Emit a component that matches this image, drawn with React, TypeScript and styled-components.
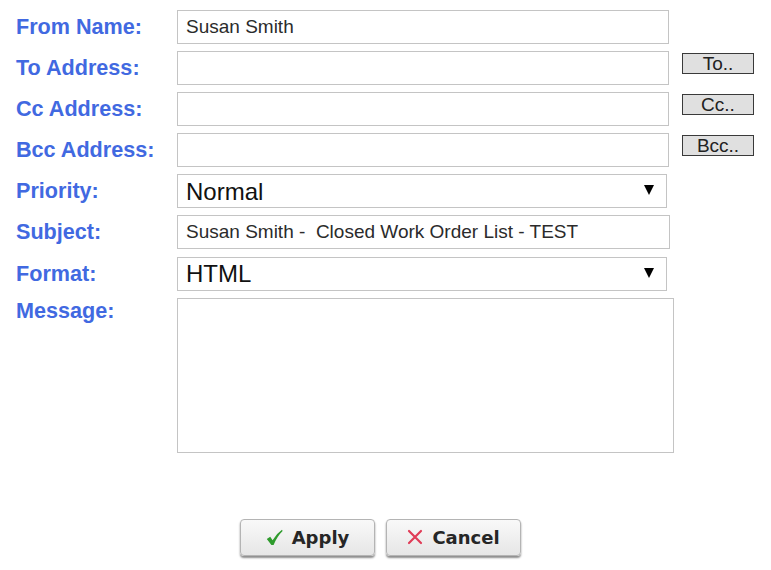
import React from 'react';
import styled, { createGlobalStyle } from 'styled-components';

const GlobalStyle = createGlobalStyle`
  html, body {
    margin: 0;
    padding: 0;
    background: #fff;
  }
  body {
    font-family: "Liberation Sans", Arial, sans-serif;
  }
`;

const Page = styled.div`
  width: 771px;
  min-height: 570px;
  padding: 10px 0 0 16px;
  box-sizing: border-box;
`;

const Form = styled.div`
  display: grid;
  grid-template-columns: 161px 505px 86px;
  grid-template-rows: repeat(7, 34px) auto;
  row-gap: 7.1px;
`;

const Label = styled.div<{ $top?: boolean }>`
  grid-column: 1;
  align-self: ${(p) => (p.$top ? 'start' : 'center')};
  color: #4169e1;
  font-weight: bold;
  font-size: 21.6px;
  line-height: 26px;
  white-space: nowrap;
`;

const Field = styled.div<{ $span?: boolean }>`
  grid-column: ${(p) => (p.$span ? '2 / 4' : '2')};
  display: flex;
`;

const SelectWrap = styled.div`
  grid-column: 2 / 4;
  position: relative;
  display: flex;
`;

const TextInput = styled.input<{ $width: number }>`
  width: ${(p) => p.$width}px;
  height: 34px;
  box-sizing: border-box;
  border: 1px solid #c4c4c4;
  padding: 0 8px;
  font-family: "Liberation Sans", Arial, sans-serif;
  font-size: 19px;
  color: #2b2b2b;
  outline: none;
`;

const Select = styled.select`
  appearance: none;
  -webkit-appearance: none;
  width: 490px;
  height: 34px;
  box-sizing: border-box;
  border: 1px solid #c4c4c4;
  border-radius: 0;
  background: #fff;
  padding: 0 8px;
  font-family: "Liberation Sans", Arial, sans-serif;
  font-size: 24px;
  color: #111;
  outline: none;
`;

const Arrow = styled.span`
  position: absolute;
  left: 467px;
  top: 11px;
  width: 0;
  height: 0;
  border-left: 5px solid transparent;
  border-right: 5px solid transparent;
  border-top: 10px solid #000;
  pointer-events: none;
`;

const TextArea = styled.textarea`
  width: 497px;
  height: 155px;
  box-sizing: border-box;
  border: 1px solid #c4c4c4;
  resize: none;
  outline: none;
  font-family: "Liberation Sans", Arial, sans-serif;
  font-size: 16px;
`;

const PickButton = styled.button`
  grid-column: 3;
  align-self: start;
  margin: 2px 0 0 0;
  width: 72px;
  height: 21px;
  padding: 0;
  background: #e0e0e0;
  border: 1px solid #3a3a3a;
  border-radius: 0;
  font-family: "Liberation Sans", Arial, sans-serif;
  font-size: 19px;
  line-height: 19px;
  color: #222;
`;

const Footer = styled.div`
  display: flex;
  gap: 11px;
  padding: 66px 0 0 224px;
`;

const ActionButton = styled.button`
  display: flex;
  align-items: center;
  justify-content: center;
  gap: 9px;
  width: 135px;
  height: 37px;
  padding: 0;
  border: 1px solid #b4b4b4;
  border-radius: 4px;
  background: linear-gradient(#f9f9f9, #e6e6e6);
  box-shadow: 0 2px 2px rgba(0, 0, 0, 0.45);
  font-family: "DejaVu Sans", Verdana, sans-serif;
  font-weight: bold;
  font-size: 18px;
  color: #262626;
`;

const CheckIcon = () => (
  <svg width="17" height="17" viewBox="0 0 17 17">
    <path
      d="M0.8 10 L4.2 7.8 L6.6 11.2 Q10 5 16 0.8 L16.6 2 Q11 7.5 7.6 16 L5.4 16 Z"
      fill="#2e9b2c"
    />
  </svg>
);

const CrossIcon = () => (
  <svg width="16" height="16" viewBox="0 0 16 16">
    <path d="M2 2 L14 14 M14 2 L2 14" stroke="#e03c57" strokeWidth="2.2" strokeLinecap="round" />
  </svg>
);

export default function App() {
  return (
    <>
      <GlobalStyle />
      <Page>
        <Form>
          <Label>From Name:</Label>
          <Field $span>
            <TextInput $width={492} defaultValue="Susan Smith" />
          </Field>

          <Label>To Address:</Label>
          <Field>
            <TextInput $width={492} />
          </Field>
          <PickButton>To..</PickButton>

          <Label>Cc Address:</Label>
          <Field>
            <TextInput $width={492} />
          </Field>
          <PickButton>Cc..</PickButton>

          <Label>Bcc Address:</Label>
          <Field>
            <TextInput $width={492} />
          </Field>
          <PickButton>Bcc..</PickButton>

          <Label>Priority:</Label>
          <SelectWrap>
            <Select defaultValue="Normal">
              <option>High</option>
              <option>Normal</option>
              <option>Low</option>
            </Select>
            <Arrow />
          </SelectWrap>

          <Label>Subject:</Label>
          <Field $span>
            <TextInput $width={493} defaultValue="Susan Smith -  Closed Work Order List - TEST" />
          </Field>

          <Label>Format:</Label>
          <SelectWrap>
            <Select defaultValue="HTML">
              <option>HTML</option>
              <option>Text</option>
            </Select>
            <Arrow />
          </SelectWrap>

          <Label $top>Message:</Label>
          <Field $span>
            <TextArea />
          </Field>
        </Form>

        <Footer>
          <ActionButton>
            <CheckIcon />
            Apply
          </ActionButton>
          <ActionButton>
            <CrossIcon />
            Cancel
          </ActionButton>
        </Footer>
      </Page>
    </>
  );
}
